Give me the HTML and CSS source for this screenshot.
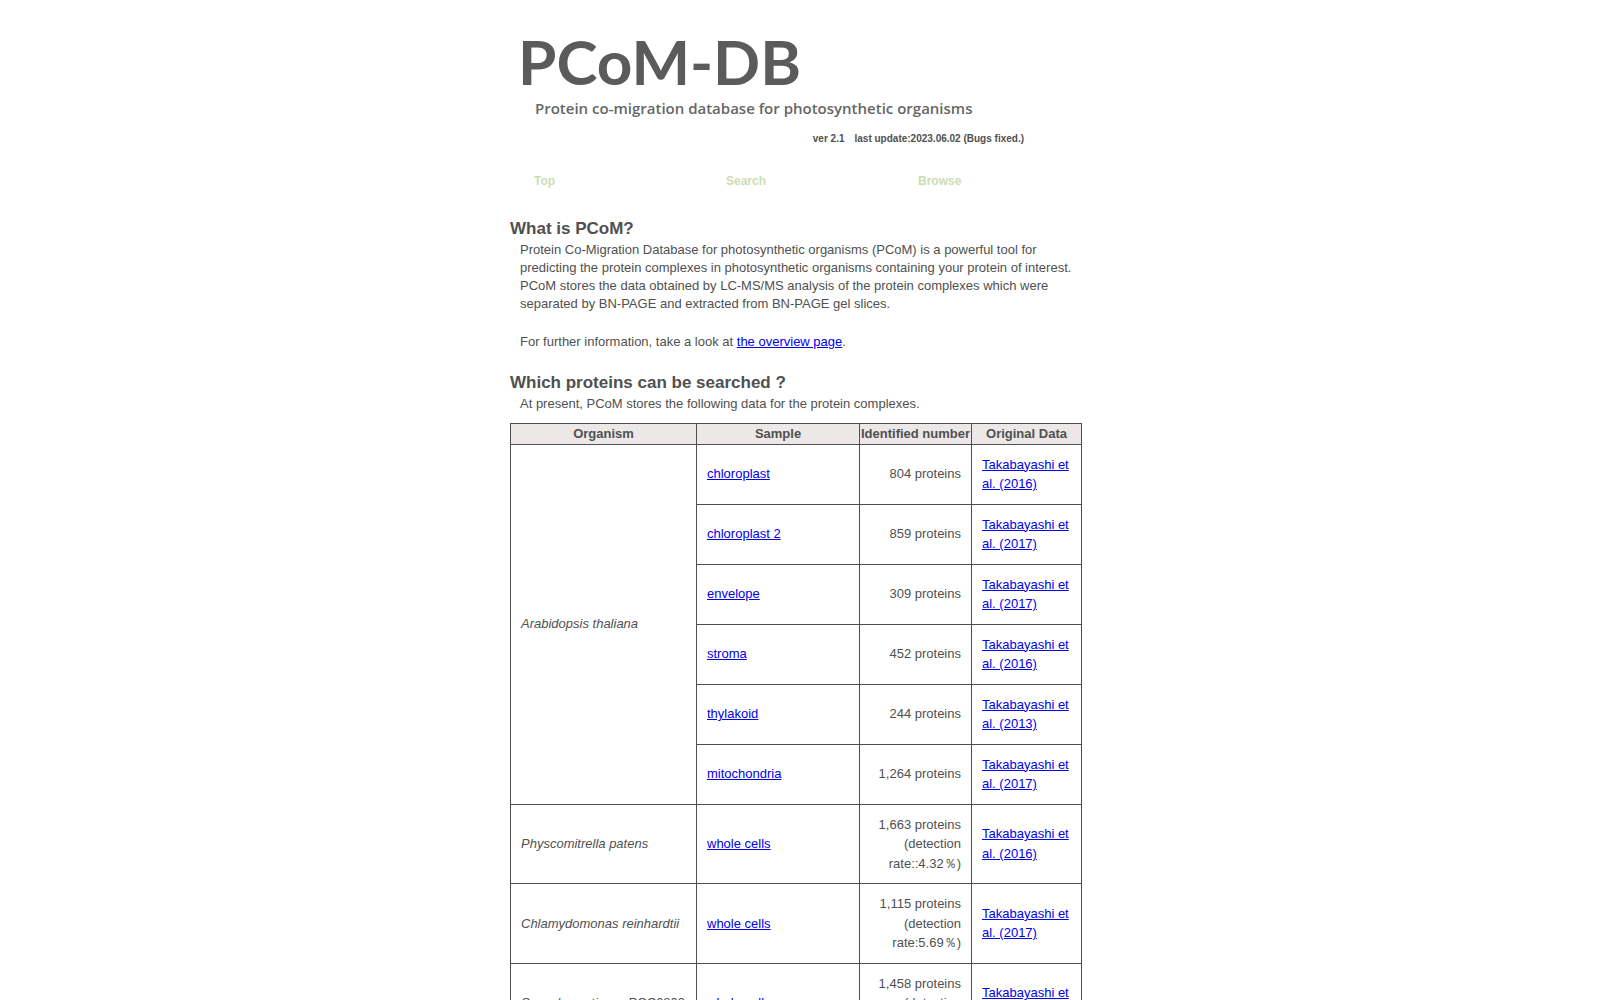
FILE: index.html
```html
<!DOCTYPE html>
<html lang="en">
<head>
    <meta charset="UTF-8">
    <meta name="viewport" content="width=device-width, initial-scale=1.0">
    <title>PCoM-DB</title>
    <link rel="stylesheet" href="styles.css">
</head>
<body>
    <div class="container">
        <header>
            <h1 class="logo">PCoM-DB</h1>
            <p class="tagline">Protein co-migration database for photosynthetic organisms</p>
            <p class="version">ver 2.1　last update:2023.06.02 (Bugs fixed.)</p>
        </header>
        <nav class="menu">
            <a href="#top">Top</a>
            <a href="#search">Search</a>
            <a href="#browse">Browse</a>
        </nav>
        <main>
            <h2>What is PCoM?</h2>
            <p>Protein Co-Migration Database for photosynthetic organisms (PCoM) is a powerful tool for predicting the protein complexes in photosynthetic organisms containing your protein of interest. PCoM stores the data obtained by LC-MS/MS analysis of the protein complexes which were separated by BN-PAGE and extracted from BN-PAGE gel slices.</p>
            <p>For further information, take a look at <a href="#overview">the overview page</a>.</p>
            <h2>Which proteins can be searched ?</h2>
            <p class="lead">At present, PCoM stores the following data for the protein complexes.</p>
            <table>
                <colgroup>
                    <col class="col-organism">
                    <col class="col-sample">
                    <col class="col-number">
                    <col class="col-data">
                </colgroup>
                <thead>
                    <tr>
                        <th>Organism</th>
                        <th>Sample</th>
                        <th>Identified number</th>
                        <th>Original Data</th>
                    </tr>
                </thead>
                <tbody>
                    <tr>
                        <td rowspan="6"><i>Arabidopsis thaliana</i></td>
                        <td><a href="#chloroplast">chloroplast</a></td>
                        <td class="number">804 proteins</td>
                        <td><a href="#ref2016">Takabayashi et al. (2016)</a></td>
                    </tr>
                    <tr>
                        <td><a href="#chloroplast2">chloroplast 2</a></td>
                        <td class="number">859 proteins</td>
                        <td><a href="#ref2017">Takabayashi et al. (2017)</a></td>
                    </tr>
                    <tr>
                        <td><a href="#envelope">envelope</a></td>
                        <td class="number">309 proteins</td>
                        <td><a href="#ref2017">Takabayashi et al. (2017)</a></td>
                    </tr>
                    <tr>
                        <td><a href="#stroma">stroma</a></td>
                        <td class="number">452 proteins</td>
                        <td><a href="#ref2016">Takabayashi et al. (2016)</a></td>
                    </tr>
                    <tr>
                        <td><a href="#thylakoid">thylakoid</a></td>
                        <td class="number">244 proteins</td>
                        <td><a href="#ref2013">Takabayashi et al. (2013)</a></td>
                    </tr>
                    <tr>
                        <td><a href="#mitochondria">mitochondria</a></td>
                        <td class="number">1,264 proteins</td>
                        <td><a href="#ref2017">Takabayashi et al. (2017)</a></td>
                    </tr>
                    <tr>
                        <td><i>Physcomitrella patens</i></td>
                        <td><a href="#physcomitrella">whole cells</a></td>
                        <td class="number">1,663 proteins (detection rate::4.32％)</td>
                        <td><a href="#ref2016">Takabayashi et al. (2016)</a></td>
                    </tr>
                    <tr>
                        <td><i>Chlamydomonas reinhardtii</i></td>
                        <td><a href="#chlamydomonas">whole cells</a></td>
                        <td class="number">1,115 proteins (detection rate:5.69％)</td>
                        <td><a href="#ref2017">Takabayashi et al. (2017)</a></td>
                    </tr>
                    <tr>
                        <td><i>Synechocystis</i> sp. PCC6803</td>
                        <td><a href="#synechocystis">whole cells</a></td>
                        <td class="number">1,458 proteins (detection rate:2.54％)</td>
                        <td><a href="#ref2017">Takabayashi et al. (2017)</a></td>
                    </tr>
                </tbody>
            </table>
        </main>
    </div>
</body>
</html>
```
FILE: styles.css
```css
body {
    margin: 0;
    background-color: #fff;
    color: #505050;
    font-family: "Liberation Sans", Arial, sans-serif;
    font-size: 13px;
    line-height: 1.5;
}
.container {
    max-width: 580px;
    margin: 0 auto;
    padding-top: 24px;
}
.logo {
    margin: 0;
    padding-left: 8px;
    font-family: Lato, sans-serif;
    font-size: 62px;
    font-weight: 700;
    line-height: 74px;
    color: #5b5b5b;
}
.tagline {
    margin: 0;
    padding-left: 25px;
    font-family: "Open Sans", "Noto Sans", sans-serif;
    font-size: 15px;
    font-weight: 600;
    line-height: 20px;
    color: #666;
}
.version {
    margin: 13px 66px 0 0;
    font-size: 10px;
    font-weight: bold;
    line-height: 16px;
    text-align: right;
}
.menu {
    display: grid;
    grid-template-columns: repeat(3, 192px);
    padding: 25px 0 27px 24px;
}
.menu a {
    color: #cdddb3;
    font-size: 12px;
    font-weight: bold;
    line-height: 18px;
    text-decoration: none;
}
h2 {
    margin: 0;
    font-size: 17px;
    line-height: 24px;
}
main p {
    margin: 0 10px 20px;
    line-height: 18px;
}
main .lead {
    margin-bottom: 10px;
}
table {
    width: 572px;
    border-collapse: collapse;
    table-layout: fixed;
}
th,
td {
    border: 1px solid #505050;
}
th {
    padding: 0;
    background-color: #ece8e8;
    white-space: nowrap;
}
td {
    padding: 10px;
}
.number {
    text-align: right;
}
.col-organism {
    width: 186px;
}
.col-sample {
    width: 163px;
}
.col-number {
    width: 112px;
}
a {
    color: #00e;
}
```
